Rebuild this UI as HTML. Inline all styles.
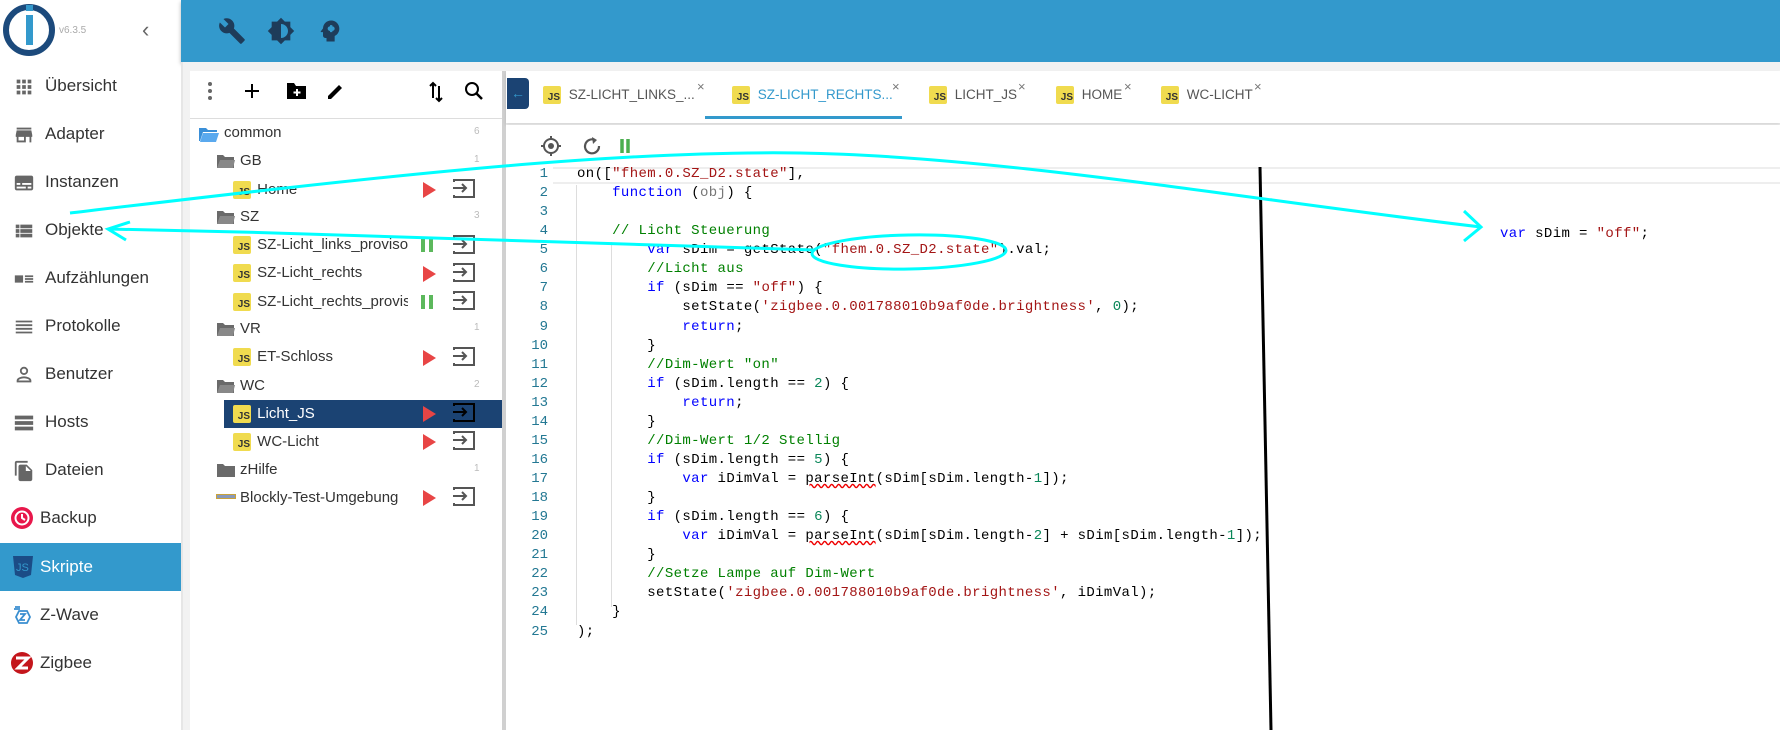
<!DOCTYPE html>
<html><head><meta charset="utf-8"><style>
*{margin:0;padding:0;box-sizing:border-box}
body{width:1780px;height:730px;overflow:hidden;background:#fff;font-family:"Liberation Sans",sans-serif;position:relative;color:#333}
.a{position:absolute}
.nav{position:absolute;left:0;width:181px;height:48px;font-size:17px;color:#333;line-height:48px}
.nav span{position:absolute;left:45px}
.nav svg{position:absolute;left:13px;top:14px}
.row{position:absolute;font-size:15px;color:#333;line-height:28px;height:28px}
.cnt{position:absolute;left:474px;font-size:10px;color:#bbb}
.js{display:inline-block;width:18px;height:18px;background:#f0db4f;border-radius:2px;font-size:10px;font-weight:bold;color:#333;text-align:right;line-height:24px;padding-right:1px;vertical-align:middle}
.play{position:absolute;left:423px;width:0;height:0;border-left:13px solid #e84545;border-top:8px solid transparent;border-bottom:8px solid transparent}
.tab{position:absolute;top:84px;font-size:13.5px;color:#555;line-height:22px}
.tab .x{position:absolute;top:-8px;font-size:13px;color:#777}
pre{font-family:"Liberation Mono",monospace;font-size:14px;letter-spacing:0.38px;line-height:19.07px;color:#000}
.k{color:#0000ff}.s{color:#a31515}.c{color:#008000}.n{color:#098658}.g{color:#777}
.ln{position:absolute;left:520px;width:28px;text-align:right;top:165px;color:#237893;font-family:"Liberation Mono",monospace;font-size:14px;line-height:19.07px}
</style></head><body>
<div class="a" style="left:181px;top:0;width:1599px;height:62px;background:#3399cc;box-shadow:0 2px 4px rgba(0,0,0,.3)"></div>
<div class="a" style="left:181px;top:62px;width:1599px;height:668px;background:#f2f2f2"></div>
<svg class="a" style="left:0;top:0" width="60" height="60"><circle cx="29" cy="30" r="23" fill="none" stroke="#1c4a7c" stroke-width="6"/><rect x="26" y="15" width="7" height="30" fill="#3399cc"/><rect x="26" y="5" width="7" height="6" fill="#3399cc"/></svg>
<div class="a" style="left:59px;top:25px;font-size:10px;color:#aaa">v6.3.5</div>
<div class="a" style="left:142px;top:17px;font-size:22px;color:#666">‹</div>
<svg class="a" style="left:218px;top:17px" width="28" height="28" viewBox="0 0 24 24"><path fill="#1e3c5a" d="M22.7 19l-9.1-9.1c.9-2.3.4-5-1.5-6.9-2-2-5-2.4-7.4-1.3L9 6 6 9 1.6 4.7C.4 7.1.9 10.1 2.9 12.1c1.9 1.9 4.6 2.4 6.9 1.5l9.1 9.1c.4.4 1 .4 1.4 0l2.3-2.3c.5-.4.5-1.1.1-1.4z"/></svg>
<svg class="a" style="left:267px;top:17px" width="28" height="28" viewBox="0 0 24 24"><path fill="#1e3c5a" d="M20 8.69V4h-4.69L12 .69 8.69 4H4v4.69L.69 12 4 15.31V20h4.69L12 23.31 15.31 20H20v-4.69L23.31 12 20 8.69zM12 18V6c3.31 0 6 2.69 6 6s-2.69 6-6 6z"/></svg>
<svg class="a" style="left:316px;top:17px" width="28" height="28" viewBox="0 0 24 24"><path fill="#1e3c5a" d="M13 3C9.2 3 6.1 5.9 6 9.7L4.1 12.3c-.2.3 0 .7.4.7H6v3c0 1.1.9 2 2 2h1v3h7v-4.7c2.4-1.1 4-3.5 4-6.3 0-3.9-3.1-7-7-7zm3 7c0 1.1-.9 2-2 2v1h-2v-1c-1.1 0-2-.9-2-2s.9-2 2-2v-1h2v1c1.1 0 2 .9 2 2z"/></svg>
<div class="a" style="left:181px;top:62px;width:2px;height:668px;background:#e6e6e6"></div>
<div class="nav" style="top:62px"><svg width="22" height="22" viewBox="0 0 24 24"><path fill="#666" d="M4 8h4V4H4v4zm6 12h4v-4h-4v4zm-6 0h4v-4H4v4zm0-6h4v-4H4v4zm6 0h4v-4h-4v4zm6-10v4h4V4h-4zm-6 4h4V4h-4v4zm6 6h4v-4h-4v4zm0 6h4v-4h-4v4z"/></svg><span>Übersicht</span></div>
<div class="nav" style="top:110px"><svg width="22" height="22" viewBox="0 0 24 24"><path fill="#666" d="M20 4H4v2h16V4zm1 10v-2l-1-5H4l-1 5v2h1v6h10v-6h4v6h2v-6h1zm-9 4H6v-4h6v4z"/></svg><span>Adapter</span></div>
<div class="nav" style="top:158px"><svg width="22" height="22" viewBox="0 0 24 24"><path fill="#666" d="M20 4H4c-1.1 0-2 .9-2 2v12c0 1.1.9 2 2 2h16c1.1 0 2-.9 2-2V6c0-1.1-.9-2-2-2zM4 12h4v2H4v-2zm10 6H4v-2h10v2zm6 0h-4v-2h4v2zm0-4H10v-2h10v2z"/></svg><span>Instanzen</span></div>
<div class="nav" style="top:206px"><svg width="22" height="22" viewBox="0 0 24 24"><path fill="#666" d="M3 14h4v-4H3v4zm0 5h4v-4H3v4zM3 9h4V5H3v4zm5 5h13v-4H8v4zm0 5h13v-4H8v4zM8 5v4h13V5H8z"/></svg><span>Objekte</span></div>
<div class="nav" style="top:254px"><svg width="22" height="22" viewBox="0 0 24 24"><path fill="#666" d="M2 8h9v8H2zM13 8h9v2h-9zM13 11h9v2h-9zM13 14h9v2h-9z"/></svg><span>Aufzählungen</span></div>
<div class="nav" style="top:302px"><svg width="22" height="22" viewBox="0 0 24 24"><path fill="#666" d="M3 5h18v2H3zM3 9h18v2H3zM3 13h18v2H3zM3 17h18v2H3z"/></svg><span>Protokolle</span></div>
<div class="nav" style="top:350px"><svg width="22" height="22" viewBox="0 0 24 24"><path fill="none" stroke="#666" stroke-width="2" d="M12 4a3.5 3.5 0 100 7 3.5 3.5 0 000-7zM5 19v-1c0-2 4-3.5 7-3.5s7 1.5 7 3.5v1z"/></svg><span>Benutzer</span></div>
<div class="nav" style="top:398px"><svg width="22" height="22" viewBox="0 0 24 24"><path fill="#666" d="M2 4h20v4H2zM2 10h20v4H2zM2 16h20v4H2z"/></svg><span>Hosts</span></div>
<div class="nav" style="top:446px"><svg width="22" height="22" viewBox="0 0 24 24"><path fill="#666" d="M16 1H4c-1.1 0-2 .9-2 2v14h2V3h12V1zm-1 4l6 6v10c0 1.1-.9 2-2 2H8c-1.1 0-2-.9-2-2V7c0-1.1.9-2 2-2h7zm-1 7h5.5L14 6.5V12z"/></svg><span>Dateien</span></div>
<div class="nav" style="top:494px"><svg width="24" height="24" style="left:10px;top:12px" viewBox="0 0 24 24"><circle cx="12" cy="12" r="11" fill="#e8174b"/><circle cx="12" cy="12" r="6.5" fill="none" stroke="#fff" stroke-width="2"/><path d="M12 8v4l3 2" stroke="#fff" stroke-width="2" fill="none"/></svg><span style="left:40px">Backup</span></div>
<div class="nav" style="top:543px;background:#3399cc;color:#fff"><svg width="22" height="24" style="left:12px;top:12px" viewBox="0 0 22 24"><path fill="#1b4c86" d="M1 1h20l-2 19-8 3-8-3z"/><text x="4" y="16" font-size="11" fill="#3399cc" font-family="Liberation Sans">JS</text></svg><span style="left:40px">Skripte</span></div>
<div class="nav" style="top:591px"><svg width="22" height="22" style="left:11px" viewBox="0 0 22 22"><path fill="none" stroke="#3a8fd0" stroke-width="1.8" d="M8 6l-3 6 3 6h8l3-6-3-6zM9 9h5l-5 6h5M3 4h6M4 2h5"/></svg><span style="left:40px">Z-Wave</span></div>
<div class="nav" style="top:639px"><svg width="24" height="24" style="left:10px;top:12px" viewBox="0 0 24 24"><circle cx="12" cy="12" r="11" fill="#c4161c"/><path d="M6 7h12L8 17h10" stroke="#fff" stroke-width="3" fill="none"/></svg><span style="left:40px">Zigbee</span></div>
<div class="a" style="left:190px;top:71px;width:312px;height:659px;background:#fff"></div>
<div class="a" style="left:502px;top:71px;width:4px;height:659px;background:#d0d0d0"></div>
<div class="a" style="left:190px;top:118px;width:312px;height:1px;background:#ddd"></div>
<svg class="a" style="left:202px;top:80px" width="300" height="24">
<circle cx="8" cy="4" r="2" fill="#666"/><circle cx="8" cy="11" r="2" fill="#666"/><circle cx="8" cy="18" r="2" fill="#666"/>
<path d="M50 4v14M43 11h14" stroke="#000" stroke-width="2"/>
<path d="M85 3h7l2 3h10v13H85z" fill="#000"/><path d="M95 9v7M91.5 12.5h7" stroke="#fff" stroke-width="2"/>
<path d="M126 16l11-11 3 3-11 11h-3z" fill="#000"/>
<path d="M231 3v15M228 6l3-3 3 3M237 6v15M234 18l3 3 3-3" stroke="#000" stroke-width="2" fill="none"/>
<circle cx="270" cy="9" r="6" fill="none" stroke="#000" stroke-width="2"/><path d="M274 13l6 6" stroke="#000" stroke-width="2.5"/>
</svg>
<div class="a" style="left:224px;top:400px;width:278px;height:28px;background:#1b4373"></div>
<svg class="a" style="left:198px;top:125px" width="22" height="18"><path d="M1 3h7l2 2h9v2H5l-3 9H1z" fill="#3a8fd8"/><path d="M5 8h16l-3 9H2z" fill="#5aa9ee"/></svg>
<div class="row" style="left:224px;top:119px">common</div><div class="cnt" style="top:126px">6</div>
<svg class="a" style="left:216px;top:153px" width="20" height="16"><path d="M1 2h6l2 2h9v11H1z" fill="#6a6a6a"/><path d="M4 7h15l-2 8H1z" fill="#888"/></svg><div class="row" style="left:240px;top:147px">GB</div><div class="cnt" style="top:154px">1</div>
<div class="row" style="left:233px;top:176px"><span class="js">JS</span> <span style="margin-left:2px">Home</span></div><div class="play" style="top:182px"></div>
<svg class="a" style="left:216px;top:209px" width="20" height="16"><path d="M1 2h6l2 2h9v11H1z" fill="#6a6a6a"/><path d="M4 7h15l-2 8H1z" fill="#888"/></svg><div class="row" style="left:240px;top:203px">SZ</div><div class="cnt" style="top:210px">3</div>
<div class="row" style="left:233px;top:231px;width:175px;overflow:hidden;white-space:nowrap"><span class="js">JS</span> <span style="margin-left:2px">SZ-Licht_links_provisori</span></div><div class="a" style="left:421px;top:238px;width:4px;height:14px;background:#5cb85c"></div><div class="a" style="left:429px;top:238px;width:4px;height:14px;background:#5cb85c"></div>
<div class="row" style="left:233px;top:259px"><span class="js">JS</span> <span style="margin-left:2px">SZ-Licht_rechts</span></div><div class="play" style="top:266px"></div>
<div class="row" style="left:233px;top:288px;width:175px;overflow:hidden;white-space:nowrap"><span class="js">JS</span> <span style="margin-left:2px">SZ-Licht_rechts_provisor</span></div><div class="a" style="left:421px;top:295px;width:4px;height:14px;background:#5cb85c"></div><div class="a" style="left:429px;top:295px;width:4px;height:14px;background:#5cb85c"></div>
<svg class="a" style="left:216px;top:321px" width="20" height="16"><path d="M1 2h6l2 2h9v11H1z" fill="#6a6a6a"/><path d="M4 7h15l-2 8H1z" fill="#888"/></svg><div class="row" style="left:240px;top:315px">VR</div><div class="cnt" style="top:322px">1</div>
<div class="row" style="left:233px;top:343px"><span class="js">JS</span> <span style="margin-left:2px">ET-Schloss</span></div><div class="play" style="top:350px"></div>
<svg class="a" style="left:216px;top:378px" width="20" height="16"><path d="M1 2h6l2 2h9v11H1z" fill="#6a6a6a"/><path d="M4 7h15l-2 8H1z" fill="#888"/></svg><div class="row" style="left:240px;top:372px">WC</div><div class="cnt" style="top:379px">2</div>
<div class="row" style="left:233px;top:400px;color:#fff"><span class="js">JS</span> <span style="margin-left:2px">Licht_JS</span></div><div class="play" style="top:406px"></div>
<div class="row" style="left:233px;top:428px"><span class="js">JS</span> <span style="margin-left:2px">WC-Licht</span></div><div class="play" style="top:434px"></div>
<svg class="a" style="left:216px;top:462px" width="20" height="16"><path d="M1 2h6l2 2h10v11H1z" fill="#6a6a6a"/></svg><div class="row" style="left:240px;top:456px">zHilfe</div><div class="cnt" style="top:463px">1</div>
<div class="a" style="left:216px;top:494px;width:20px;height:5px;background:#8899bb;border:1px solid #c9a23a"></div><div class="row" style="left:240px;top:484px">Blockly-Test-Umgebung</div><div class="play" style="top:490px"></div>
<svg class="a" style="left:452px;top:178px" width="24" height="330" fill="none" stroke-width="2">
<g stroke="#555"><path d="M2 4v-2h20v17H2v-2M1 10h13M10 6l4 4-4 4"/></g>
<g transform="translate(0,56)" stroke="#555"><path d="M2 4v-2h20v17H2v-2M1 10h13M10 6l4 4-4 4"/></g>
<g transform="translate(0,84)" stroke="#555"><path d="M2 4v-2h20v17H2v-2M1 10h13M10 6l4 4-4 4"/></g>
<g transform="translate(0,112)" stroke="#555"><path d="M2 4v-2h20v17H2v-2M1 10h13M10 6l4 4-4 4"/></g>
<g transform="translate(0,168)" stroke="#555"><path d="M2 4v-2h20v17H2v-2M1 10h13M10 6l4 4-4 4"/></g>
<g transform="translate(0,224)" stroke="#000"><path d="M2 4v-2h20v17H2v-2M1 10h13M10 6l4 4-4 4"/></g>
<g transform="translate(0,252)" stroke="#555"><path d="M2 4v-2h20v17H2v-2M1 10h13M10 6l4 4-4 4"/></g>
<g transform="translate(0,308)" stroke="#555"><path d="M2 4v-2h20v17H2v-2M1 10h13M10 6l4 4-4 4"/></g>
</svg>
<div class="a" style="left:506px;top:71px;width:1274px;height:52px;background:#fff;box-shadow:0 2px 3px rgba(0,0,0,.12)"></div>
<div class="a" style="left:506px;top:125px;width:1274px;height:605px;background:#fff"></div>
<div class="a" style="left:507px;top:78px;width:22px;height:31px;background:#1b4373;border-radius:0 4px 4px 0;color:#3399cc;font-size:14px;text-align:center;line-height:31px">←</div>
<div class="tab" style="left:543px"><span class="js">JS</span> <span style="margin-left:4px">SZ-LICHT_LINKS_...</span><span class="x" style="left:154px">×</span></div>
<div class="tab" style="left:732px;color:#3399cc"><span class="js">JS</span> <span style="margin-left:4px">SZ-LICHT_RECHTS...</span><span class="x" style="left:160px">×</span></div>
<div class="a" style="left:705px;top:116px;width:197px;height:3px;background:#3399cc"></div>
<div class="tab" style="left:929px"><span class="js">JS</span> <span style="margin-left:4px">LICHT_JS</span><span class="x" style="left:89px">×</span></div>
<div class="tab" style="left:1056px"><span class="js">JS</span> <span style="margin-left:4px">HOME</span><span class="x" style="left:68px">×</span></div>
<div class="tab" style="left:1161px"><span class="js">JS</span> <span style="margin-left:4px">WC-LICHT</span><span class="x" style="left:93px">×</span></div>
<svg class="a" style="left:540px;top:135px" width="100" height="22" fill="none">
<circle cx="11" cy="11" r="7" stroke="#555" stroke-width="2"/><circle cx="11" cy="11" r="3" fill="#555"/><path d="M11 1v3M11 18v3M1 11h3M18 11h3" stroke="#555" stroke-width="2"/>
<path d="M55 5a7 7 0 1 0 4 6" stroke="#555" stroke-width="2.2"/><path d="M52 2l5 3-4 4z" fill="#555"/>
<path d="M82 4v14M88 4v14" stroke="#4caf50" stroke-width="3.5"/>
</svg>
<div class="a" style="left:553px;top:167px;width:1227px;height:17px;border-top:2px solid #eee;border-bottom:2px solid #eee"></div>
<div class="a" style="left:576px;top:185px;width:1px;height:440px;background:#ddd"></div>
<div class="a" style="left:611px;top:242px;width:1px;height:365px;background:#ddd"></div>
<div class="ln">1<br>2<br>3<br>4<br>5<br>6<br>7<br>8<br>9<br>10<br>11<br>12<br>13<br>14<br>15<br>16<br>17<br>18<br>19<br>20<br>21<br>22<br>23<br>24<br>25</div>
<pre class="a" style="left:577px;top:165px">on([<span class="s">"fhem.0.SZ_D2.state"</span>],
    <span class="k">function</span> (<span class="g">obj</span>) {

    <span class="c">// Licht Steuerung</span>
        <span class="k">var</span> sDim = getState(<span class="s">"fhem.0.SZ_D2.state"</span>).val;
        <span class="c">//Licht aus</span>
        <span class="k">if</span> (sDim == <span class="s">"off"</span>) {
            setState(<span class="s">'zigbee.0.001788010b9af0de.brightness'</span>, <span class="n">0</span>);
            <span class="k">return</span>;
        }
        <span class="c">//Dim-Wert "on"</span>
        <span class="k">if</span> (sDim.length == <span class="n">2</span>) {
            <span class="k">return</span>;
        }
        <span class="c">//Dim-Wert 1/2 Stellig</span>
        <span class="k">if</span> (sDim.length == <span class="n">5</span>) {
            <span class="k">var</span> iDimVal = <span style="text-decoration:underline wavy #e00">parseInt</span>(sDim[sDim.length-<span class="n">1</span>]);
        }
        <span class="k">if</span> (sDim.length == <span class="n">6</span>) {
            <span class="k">var</span> iDimVal = <span style="text-decoration:underline wavy #e00">parseInt</span>(sDim[sDim.length-<span class="n">2</span>] + sDim[sDim.length-<span class="n">1</span>]);
        }
        <span class="c">//Setze Lampe auf Dim-Wert</span>
        setState(<span class="s">'zigbee.0.001788010b9af0de.brightness'</span>, iDimVal);
    }
);</pre>
<pre class="a" style="left:1500px;top:225px"><span class="k">var</span> sDim = <span class="s">"off"</span>;</pre>
<svg class="a" style="left:0;top:0" width="1780" height="730" fill="none">
<path d="M1260 167L1271 730" stroke="#000" stroke-width="3"/>
<path d="M70 213C350 180 600 150 800 153C1000 156 1250 200 1481 227" stroke="#00ffff" stroke-width="3"/>
<path d="M1464 211L1481 227L1464 241" stroke="#00ffff" stroke-width="3"/>
<path d="M108 229C350 234 600 242 815 250" stroke="#00ffff" stroke-width="3"/>
<path d="M130 222L108 229L126 240" stroke="#00ffff" stroke-width="3"/>
<ellipse cx="909" cy="252" rx="97" ry="17" transform="rotate(-1 909 252)" stroke="#00ffff" stroke-width="3"/>
</svg>
</body></html>
